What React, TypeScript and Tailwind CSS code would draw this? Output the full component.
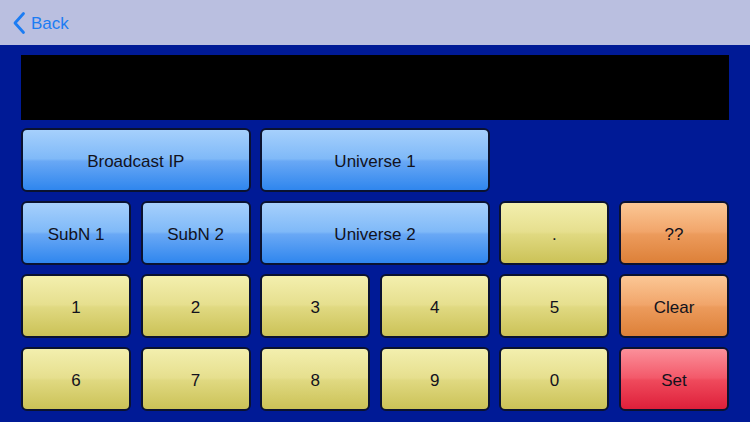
import React from "react";

type Kind = "blue" | "yellow" | "orange" | "red";

const grad: Record<Kind, string> = {
  blue: "bg-[linear-gradient(to_bottom,#a6d0fc_0%,#7fb9f8_48%,#69a8f5_52%,#2f86ee_100%)]",
  yellow: "bg-[linear-gradient(to_bottom,#f3efae_0%,#e6df8e_48%,#e0d981_52%,#cbc257_100%)]",
  orange: "bg-[linear-gradient(to_bottom,#fbc795_0%,#f1a56a_48%,#ec9b5c_52%,#dd8038_100%)]",
  red: "bg-[linear-gradient(to_bottom,#fb909a_0%,#f3596a_48%,#ef4a5c_52%,#de1f3a_100%)]",
};

function Key({ label, kind, span2 = false }: { label: string; kind: Kind; span2?: boolean }) {
  return (
    <div
      className={`${span2 ? "col-span-2" : ""} h-[64px] rounded-[6px] border-[2px] border-[#0a1230] ${grad[kind]} flex items-center justify-center pt-[3px] text-[17px] text-[#12121c] font-['Liberation_Sans',Arial,sans-serif]`}
    >
      {label}
    </div>
  );
}

export default function App() {
  return (
    <div className="w-[750px] h-[422px] bg-[#001a96] flex flex-col overflow-hidden font-['Liberation_Sans',Arial,sans-serif]">
      <div className="h-[45px] bg-[#babfe0] flex items-center pl-[12px] shrink-0">
        <svg width="14" height="24" viewBox="0 0 14 24" className="mr-[5px]">
          <path d="M11.5 2.5 L3 12 L11.5 21.5" fill="none" stroke="#1c7cf3" strokeWidth="2.8" strokeLinecap="round" strokeLinejoin="round" />
        </svg>
        <span className="text-[17px] text-[#1c7cf3] leading-none pt-[1px]">Back</span>
      </div>
      <div className="px-[21px] pt-[10px]">
        <div className="h-[65px] bg-black" />
        <div className="grid grid-cols-6 gap-x-[9.6px] gap-y-[9px] mt-[8px]">
          <Key label="Broadcast IP" kind="blue" span2 />
          <Key label="Universe 1" kind="blue" span2 />
          <div className="col-span-2" />
          <Key label="SubN 1" kind="blue" />
          <Key label="SubN 2" kind="blue" />
          <Key label="Universe 2" kind="blue" span2 />
          <Key label="." kind="yellow" />
          <Key label="??" kind="orange" />
          <Key label="1" kind="yellow" />
          <Key label="2" kind="yellow" />
          <Key label="3" kind="yellow" />
          <Key label="4" kind="yellow" />
          <Key label="5" kind="yellow" />
          <Key label="Clear" kind="orange" />
          <Key label="6" kind="yellow" />
          <Key label="7" kind="yellow" />
          <Key label="8" kind="yellow" />
          <Key label="9" kind="yellow" />
          <Key label="0" kind="yellow" />
          <Key label="Set" kind="red" />
        </div>
      </div>
    </div>
  );
}
